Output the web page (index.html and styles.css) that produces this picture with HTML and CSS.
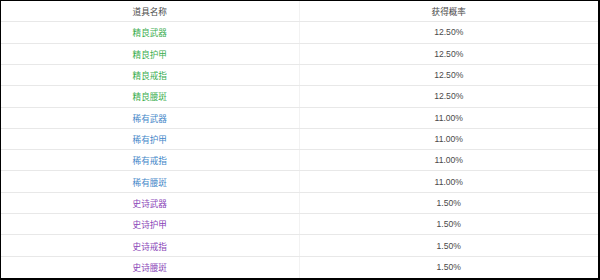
FILE: index.html
```html
<!DOCTYPE html>
<html>
<head>
<meta charset="utf-8">
<link rel="stylesheet" href="styles.css">
</head>
<body>
<div class="frame">
  <div class="table">
    <div class="row head"><div class="cell name">道具名称</div><div class="cell">获得概率</div></div>
    <div class="row"><div class="cell name green">精良武器</div><div class="cell">12.50%</div></div>
    <div class="row"><div class="cell name green">精良护甲</div><div class="cell">12.50%</div></div>
    <div class="row"><div class="cell name green">精良戒指</div><div class="cell">12.50%</div></div>
    <div class="row"><div class="cell name green">精良腰斑</div><div class="cell">12.50%</div></div>
    <div class="row"><div class="cell name blue">稀有武器</div><div class="cell">11.00%</div></div>
    <div class="row"><div class="cell name blue">稀有护甲</div><div class="cell">11.00%</div></div>
    <div class="row"><div class="cell name blue">稀有戒指</div><div class="cell">11.00%</div></div>
    <div class="row"><div class="cell name blue">稀有腰斑</div><div class="cell">11.00%</div></div>
    <div class="row"><div class="cell name purple">史诗武器</div><div class="cell">1.50%</div></div>
    <div class="row"><div class="cell name purple">史诗护甲</div><div class="cell">1.50%</div></div>
    <div class="row"><div class="cell name purple">史诗戒指</div><div class="cell">1.50%</div></div>
    <div class="row"><div class="cell name purple">史诗腰斑</div><div class="cell">1.50%</div></div>
  </div>
</div>
</body>
</html>
```
FILE: styles.css
```css
html, body {
  margin: 0;
  padding: 0;
  background: #fff;
}
.frame {
  box-sizing: border-box;
  width: 600px;
  height: 280px;
  border-style: solid;
  border-color: #000;
  border-width: 1px 2px 2px 1px;
  background: #fff;
  font-family: "Liberation Sans", "Noto Sans CJK SC", sans-serif;
  font-size: 8.6px;
  color: #4a4a4a;
}
.table {
  display: grid;
  grid-template-rows: repeat(13, 1fr);
  height: 100%;
}
.row {
  display: grid;
  grid-template-columns: 1fr 1fr;
  border-bottom: 1px solid #e8e8e8;
}
.row:last-child {
  border-bottom: none;
}
.cell {
  display: flex;
  align-items: center;
  justify-content: center;
}
.cell.name {
  border-right: 1px solid #f2f2f2;
}
.green { color: #3aae4f; }
.blue { color: #3f86c8; }
.purple { color: #8a45b8; }
```
